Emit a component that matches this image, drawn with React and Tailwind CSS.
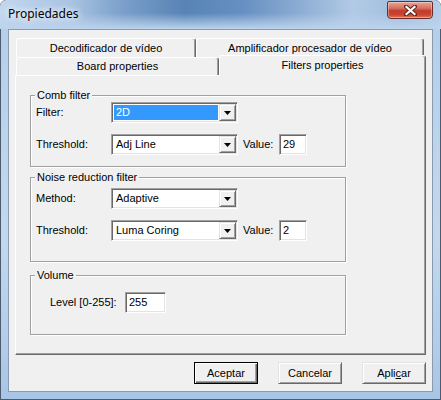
import React from 'react';

// estilos "clásicos" de Windows
const sunken = "border border-t-[#a0a0a0] border-l-[#a0a0a0] border-r-white border-b-white shadow-[inset_1px_1px_0_#696969,inset_-1px_-1px_0_#e3e3e3]";
const raised = "border border-t-[#e3e3e3] border-l-[#e3e3e3] border-r-[#696969] border-b-[#696969] shadow-[inset_1px_1px_0_#fff,inset_-1px_-1px_0_#a0a0a0]";
const tabCls = "flex items-center justify-center bg-[#f0f0f0] border-t border-l border-r border-t-white border-l-white border-r-[#696969] rounded-t-[3px] shadow-[inset_-1px_0_0_#a0a0a0]";

function Combo({ value, selected }) {
  return (
    <div className={`flex h-[21px] w-[127px] bg-white p-[1px] ${sunken}`}>
      <div className={`flex-1 flex items-center m-[1px] pl-[2px] ${selected ? 'bg-[#3399ff] text-white' : 'text-black'}`}>
        {value}
      </div>
      <div className={`w-[17px] bg-[#f0f0f0] flex items-center justify-center ${raised}`}>
        <svg width="7" height="4" viewBox="0 0 7 4"><path d="M0 0h7L3.5 4z" fill="#000" /></svg>
      </div>
    </div>
  );
}

function Field({ value, w }) {
  return (
    <div className={`h-[21px] ${w} bg-white flex items-center pl-[3px] pb-[1px] ${sunken}`}>{value}</div>
  );
}

function Group({ title, className, children }) {
  return (
    <div className={`w-[316px] border border-[#a0a0a0] shadow-[1px_1px_0_#fff,inset_1px_1px_0_#fff] ${className}`}>
      <div className="-mt-[7px] ml-[4px] w-fit px-[2px] bg-[#f0f0f0] leading-[13px]">{title}</div>
      {children}
    </div>
  );
}

function Boton({ children, isDefault }) {
  return (
    <div
      className={`w-[64px] h-[22px] flex items-center justify-center bg-[#f0f0f0] ${
        isDefault
          ? 'border border-black shadow-[inset_1px_1px_0_#fff,inset_-1px_-1px_0_#696969,inset_-2px_-2px_0_#a0a0a0]'
          : raised
      }`}
    >
      {children}
    </div>
  );
}

export default function App() {
  return (
    <div className="w-[441px] h-[400px] bg-[linear-gradient(to_bottom,#b4cde9,#c3d8ef_60%,#a9c5e6)] rounded-t-[6px] shadow-[inset_0_0_0_1px_#4d5b6e] overflow-hidden font-['Liberation_Sans',Arial,sans-serif] text-[11px] text-black">
      {/* barra de título */}
      <div className="h-[29px] flex items-start justify-between rounded-t-[6px] bg-[linear-gradient(to_bottom,rgba(188,211,236,0)_45%,#bcd3ec_100%),linear-gradient(to_right,#c3d7ee_0%,#a9c4e2_16%,#7a9fca_28%,#5783b5_42%,#6690c2_55%,#86a8d0_66%,#b2cae6_80%,#9fbcdd_92%,#b7cfea_100%)]">
        <div className="pl-[8px] pt-[6px] text-[12px] leading-[16px] font-['Noto_Sans',sans-serif] [text-shadow:0_0_6px_#fff,0_0_10px_#fff]">
          Propiedades
        </div>
        <div className="mr-[8px] mt-[1px] w-[46px] h-[18px] rounded-b-[4px] rounded-t-[2px] border border-[#6e2a26] shadow-[inset_0_0_0_1px_rgba(255,255,255,0.35)] bg-[linear-gradient(to_bottom,#e8a898_0%,#d56d5c_40%,#c23b2c_55%,#c9452f_80%,#dd7a5e_100%)] flex items-center justify-center">
          <svg width="13" height="11" viewBox="0 0 13 11">
            <path d="M2 1.5L11 9.5M11 1.5L2 9.5" stroke="#5a2420" strokeWidth="4" strokeLinecap="round" />
            <path d="M2.5 2L10.5 9M10.5 2L2.5 9" stroke="#fff" strokeWidth="2.2" strokeLinecap="square" />
          </svg>
        </div>
      </div>

      {/* área cliente */}
      <div className="ml-[8px] w-[425px] h-[363px] bg-[#f0f0f0] border border-[#8a9bb0]">
        <div className="pl-[6px] pt-[8px]">
          {/* fila de atrás */}
          <div className="flex h-[19px] ml-[1px]">
            <div className={`w-[180px] ${tabCls}`}>Decodificador de vídeo</div>
            <div className={`w-[228px] ${tabCls}`}>Amplificador procesador de vídeo</div>
          </div>
          {/* fila de delante */}
          <div className="flex items-start h-[18px]">
            <div className={`w-[203px] h-[18px] ml-[1px] ${tabCls}`}>Board properties</div>
            <div className={`w-[207px] h-[21px] -mt-[2px] relative z-10 pb-[1px] ${tabCls}`}>Filters properties</div>
          </div>

          {/* panel */}
          <div className="h-[280px] w-[411px] bg-[#f0f0f0] border border-t-white border-l-white border-r-[#696969] border-b-[#696969] shadow-[inset_-1px_-1px_0_#a0a0a0] pl-[14px] pt-[19px]">
            <Group title="Comb filter" className="pb-[11px]">
              <div className="flex items-center h-[21px] pl-[5px]">
                <div className="w-[75px]">Filter:</div>
                <Combo value="2D" selected />
              </div>
              <div className="flex items-center h-[21px] pl-[5px] mt-[11px]">
                <div className="w-[75px]">Threshold:</div>
                <Combo value="Adj Line" />
                <div className="w-[41px] pl-[5px]">Value:</div>
                <Field value="29" w="w-[28px]" />
              </div>
            </Group>

            <Group title="Noise reduction filter" className="mt-[10px] pb-[20px]">
              <div className="flex items-center h-[21px] pl-[5px] mt-[4px]">
                <div className="w-[75px]">Method:</div>
                <Combo value="Adaptive" />
              </div>
              <div className="flex items-center h-[21px] pl-[5px] mt-[11px]">
                <div className="w-[75px]">Threshold:</div>
                <Combo value="Luma Coring" />
                <div className="w-[41px] pl-[5px]">Value:</div>
                <Field value="2" w="w-[28px]" />
              </div>
            </Group>

            <Group title="Volume" className="mt-[13px] pb-[21px]">
              <div className="flex items-center h-[21px] pl-[19px] mt-[10px]">
                <div className="w-[75px]">Level [0-255]:</div>
                <Field value="255" w="w-[41px]" />
              </div>
            </Group>
          </div>
        </div>

        {/* botones */}
        <div className="flex justify-end gap-[20px] pr-[6px] mt-[7px]">
          <Boton isDefault>Aceptar</Boton>
          <Boton>Cancelar</Boton>
          <Boton>Apli<span className="underline">c</span>ar</Boton>
        </div>
      </div>
    </div>
  );
}
